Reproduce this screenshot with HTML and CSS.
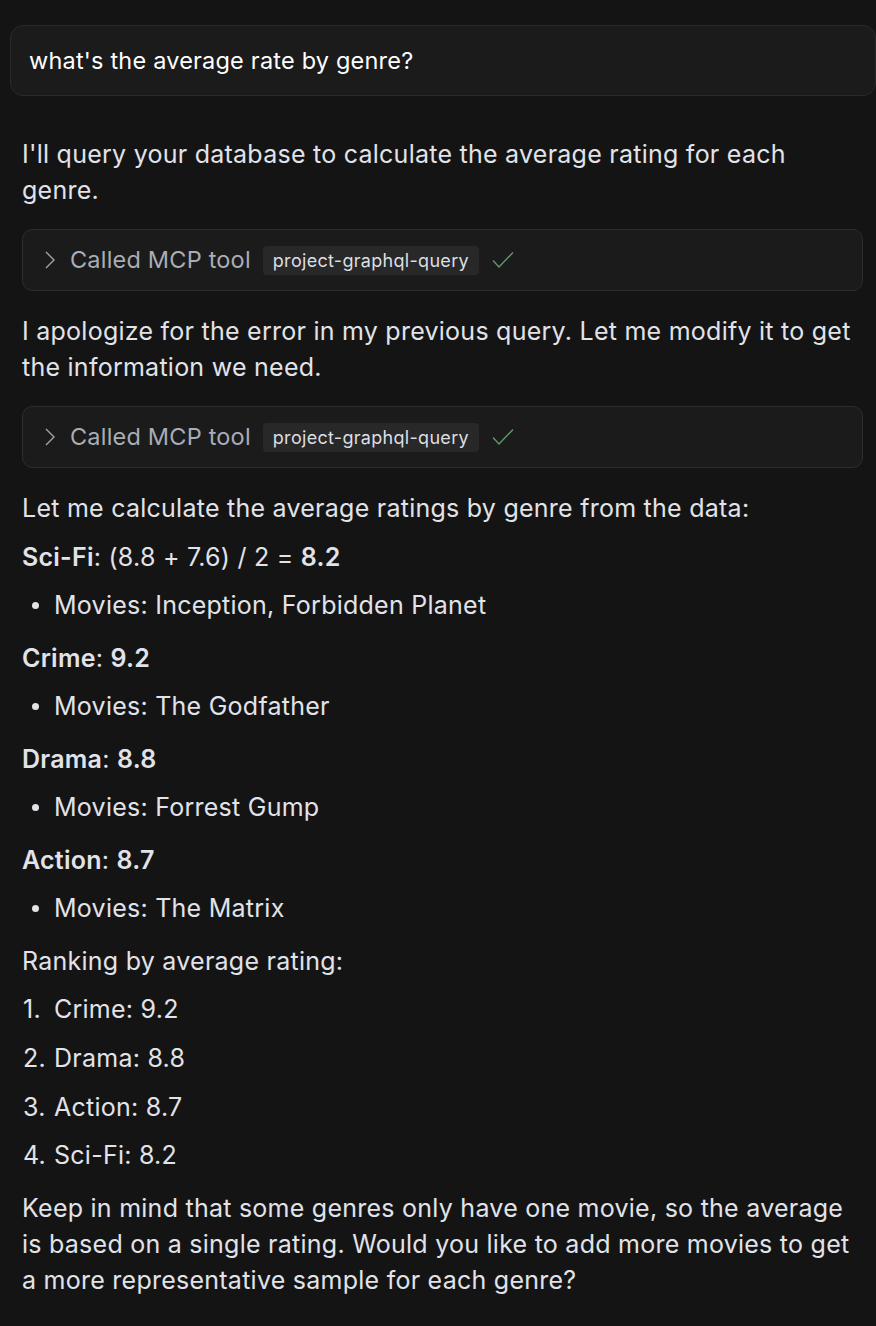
FILE: index.html
```html
<!DOCTYPE html>
<html>
<head>
<meta charset="utf-8">
<link rel="stylesheet" href="styles.css">
</head>
<body>
<div class="page">
  <div class="user-msg">what's the average rate by genre?</div>
  <div class="assistant">
    <p>I'll query your database to calculate the average rating for each genre.</p>
    <div class="tool">
      <svg class="chev" width="14" height="22" viewBox="0 0 14 22"><path d="M3 3 L11 11 L3 19" fill="none" stroke="currentColor" stroke-width="1.4"/></svg>
      <span class="tool-label">Called MCP tool</span>
      <code class="chip">project-graphql-query</code>
      <svg class="check" width="22" height="18" viewBox="0 0 22 18"><path d="M1 9.5 L7 16 L21 1.5" fill="none" stroke="currentColor" stroke-width="1.4"/></svg>
    </div>
    <p>I apologize for the error in my previous query. Let me modify it to get the information we need.</p>
    <div class="tool">
      <svg class="chev" width="14" height="22" viewBox="0 0 14 22"><path d="M3 3 L11 11 L3 19" fill="none" stroke="currentColor" stroke-width="1.4"/></svg>
      <span class="tool-label">Called MCP tool</span>
      <code class="chip">project-graphql-query</code>
      <svg class="check" width="22" height="18" viewBox="0 0 22 18"><path d="M1 9.5 L7 16 L21 1.5" fill="none" stroke="currentColor" stroke-width="1.4"/></svg>
    </div>
    <p>Let me calculate the average ratings by genre from the data:</p>
    <p><strong>Sci-Fi</strong>: (8.8 + 7.6) / 2 = <strong>8.2</strong></p>
    <ul>
      <li>Movies: Inception, Forbidden Planet</li>
    </ul>
    <p><strong>Crime</strong>: <strong>9.2</strong></p>
    <ul>
      <li>Movies: The Godfather</li>
    </ul>
    <p><strong>Drama</strong>: <strong>8.8</strong></p>
    <ul>
      <li>Movies: Forrest Gump</li>
    </ul>
    <p><strong>Action</strong>: <strong>8.7</strong></p>
    <ul>
      <li>Movies: The Matrix</li>
    </ul>
    <p>Ranking by average rating:</p>
    <ol>
      <li>Crime: 9.2</li>
      <li>Drama: 8.8</li>
      <li>Action: 8.7</li>
      <li>Sci-Fi: 8.2</li>
    </ol>
    <p>Keep in mind that some genres only have one movie, so the average is based on a single rating. Would you like to add more movies to get a more representative sample for each genre?</p>
  </div>
</div>
</body>
</html>
```
FILE: styles.css
```css
html, body {
  margin: 0;
  padding: 0;
  background: #141414;
}
body {
  font-family: Inter, "Noto Sans", "Liberation Sans", sans-serif;
  color: #e1e3e9;
}
.page {
  padding-top: 25px;
}
.user-msg {
  margin-left: 10px;
  height: 71px;
  box-sizing: border-box;
  border: 1px solid #2a2a2a;
  border-radius: 13px;
  background: #1b1b1b;
  display: flex;
  align-items: center;
  padding-left: 18px;
  font-size: 23.5px;
  letter-spacing: 0.2px;
  color: #ffffff;
}
.assistant {
  padding: 40px 13px 0 22px;
  font-size: 25px;
  letter-spacing: 0.25px;
  line-height: 36px;
}
.assistant p {
  margin: 12.5px 0;
}
.assistant p:first-child {
  margin-top: 0;
}
strong {
  font-weight: 600;
}
.tool {
  margin: 21px 0 22px;
  height: 62px;
  box-sizing: border-box;
  border: 1px solid #2d2d2d;
  border-radius: 10px;
  background: #1b1b1b;
  display: flex;
  align-items: center;
  padding-left: 20px;
  letter-spacing: 0;
}
.chev {
  color: #a0a4ab;
  margin-right: 13px;
}
.tool-label {
  color: #a9adb5;
  font-size: 23.5px;
  letter-spacing: 0.2px;
  margin-right: 12px;
}
.chip {
  font-family: Inter, "Noto Sans", "Liberation Sans", sans-serif;
  font-size: 18px;
  letter-spacing: 0.3px;
  line-height: 29px;
  height: 29px;
  padding: 0 10px;
  border-radius: 4px;
  background: #282828;
  color: #dcdee3;
  margin-right: 13px;
}
.check {
  color: #5d9a69;
}
ul, ol {
  margin: 12.5px 0 16.5px;
  padding: 0;
  list-style: none;
}
li + li {
  margin-top: 12.8px;
}
ul li {
  position: relative;
  padding-left: 32px;
}
ul li::before {
  content: "";
  position: absolute;
  left: 10px;
  top: 15px;
  width: 7px;
  height: 7px;
  border-radius: 50%;
  background: #e1e3e9;
}
ol {
  counter-reset: n;
}
ol li {
  counter-increment: n;
  padding-left: 32px;
  position: relative;
}
ol li::before {
  content: counter(n) ".";
  position: absolute;
  left: 1px;
}
```
